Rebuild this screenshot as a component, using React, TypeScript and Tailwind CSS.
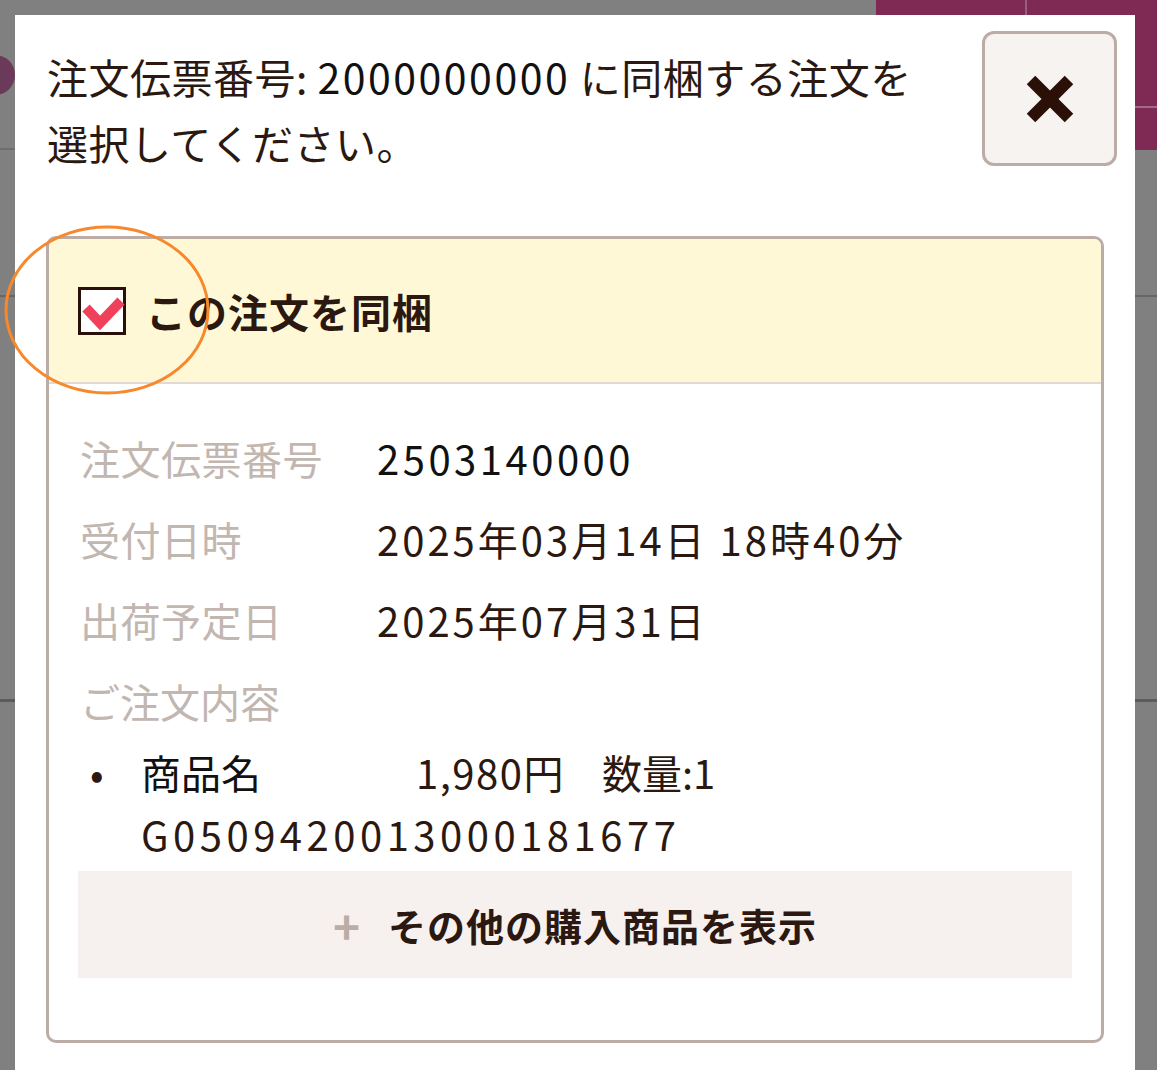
export default function App() {
  const rows = [
    { label: "注文伝票番号", value: "2503140000", black: true },
    { label: "受付日時", value: "2025年03月14日 18時40分" },
    { label: "出荷予定日", value: "2025年07月31日" },
  ];

  return (
    <div
      className="relative w-[1157px] h-[1070px] overflow-hidden bg-[#808080] text-[#2b1810]"
      style={{ fontFamily: '"Noto Sans CJK JP", "Noto Sans", sans-serif' }}
    >
      {/* 背景のページ（暗転） */}
      <div className="flex flex-col">
        <div className="h-[150px] flex justify-between border-b-2 border-[#6e6e6e]">
          <div className="w-[40px] h-[40px] rounded-full bg-[#6b3a5a] mt-[55px] -ml-[25px]" />
          <div className="w-[281px] h-[150px] bg-[#7f2a55] flex">
            <div className="w-[151px] border-r-2 border-[#95607c]" />
            <div className="flex-1 flex flex-col justify-start">
              <div className="h-[108px] border-b-2 border-[#a06a88]" />
            </div>
          </div>
        </div>
        <div className="h-[147px] border-b-2 border-[#666]" />
        <div className="h-[405px] border-b-[3px] border-[#5e5a58]" />
      </div>

      {/* モーダル */}
      <div className="absolute left-[15px] top-[15px] w-[1120px] bottom-0 bg-white">
        <div className="flex items-start pl-[32px] pr-[18px] pt-[16px]">
          <p className="w-[880px] mt-[12px] text-[41px] leading-[66px] tracking-[0.5px]">
            注文伝票番号: <span className="text-[#111] tracking-[2.5px]">2000000000</span> に同梱する注文を
            <br />
            選択してください。
          </p>
          <button className="ml-auto w-[135px] h-[135px] rounded-[12px] border-[3px] border-[#bbaca6] bg-[#f7f3f1] flex items-center justify-center">
            <svg width="48" height="48" viewBox="0 0 48 48">
              <line x1="5" y1="5" x2="43" y2="43" stroke="#2b1008" strokeWidth="12" />
              <line x1="43" y1="5" x2="5" y2="43" stroke="#2b1008" strokeWidth="12" />
            </svg>
          </button>
        </div>

        <div className="mx-[31px] mt-[61px] rounded-[10px] border-[3px] border-[#bbaca6] overflow-hidden">
          <label className="h-[145px] bg-[#fff8d6] border-b-2 border-[#e3d9d4] flex items-center pl-[29px] gap-[20px]">
            <svg width="48" height="48" viewBox="0 0 48 48">
              <rect x="1.5" y="1.5" width="45" height="45" fill="#fff" stroke="#2b1008" strokeWidth="3" />
              <polyline points="8,21 22,36 43,14" fill="none" stroke="#f0405a" strokeWidth="10" />
            </svg>
            <span className="text-[40px] font-bold tracking-[1px]">この注文を同梱</span>
          </label>

          <div className="px-[29px] pt-[33px] pb-[62px]">
            {rows.map((r) => (
              <div key={r.label} className="flex h-[81px] items-center text-[40px]">
                <span className="w-[299px] pl-[2px] text-[#c2b6b0] tracking-[0.5px]">{r.label}</span>
                <span className={r.black ? "text-[#111] tracking-[3.5px]" : "tracking-[3px]"}>{r.value}</span>
              </div>
            ))}
            <div className="h-[81px] flex items-center pl-[2px] text-[40px] text-[#c2b6b0]">ご注文内容</div>

            <ul className="text-[40px] leading-[62px]">
              <li className="flex">
                <span className="w-[63px] pl-[12px]">•</span>
                <div>
                  <div className="flex">
                    <span className="w-[275px] text-[#111]">商品名</span>
                    <span className="tracking-[1.5px]">1,980円</span>
                    <span className="ml-[37px]">数量:1</span>
                  </div>
                  <div className="tracking-[4.5px]">G0509420013000181677</div>
                </div>
              </li>
            </ul>

            <button className="mt-[6px] w-full h-[107px] bg-[#f6f1ef] flex items-center justify-center gap-[28px]">
              <span className="text-[46px] font-bold text-[#bbaca6] leading-none">+</span>
              <span className="text-[38px] font-bold tracking-[1px]">その他の購入商品を表示</span>
            </button>
          </div>
        </div>
      </div>

      {/* 注記の丸 */}
      <svg className="absolute left-0 top-0 pointer-events-none" width="1157" height="1070">
        <ellipse cx="107" cy="310" rx="101" ry="83" fill="none" stroke="#f7882c" strokeWidth="3" />
      </svg>
    </div>
  );
}
